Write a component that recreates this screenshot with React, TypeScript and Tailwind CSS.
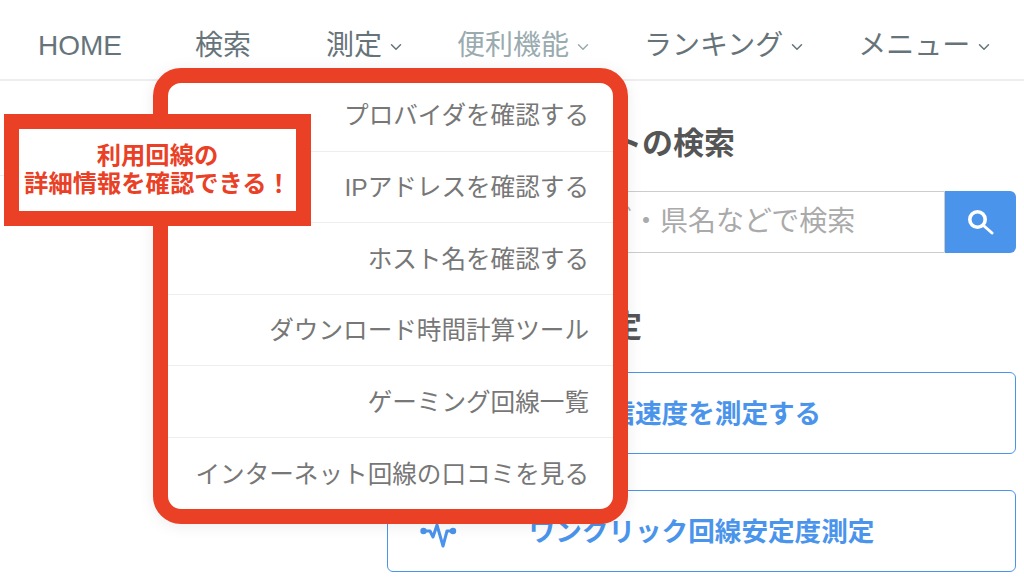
import { ChevronDown } from "lucide-react";

const font = "font-['Liberation_Sans','Noto_Sans_CJK_JP',sans-serif]";

const navItems = [
  { label: "HOME", cls: "pl-[38px] pr-[36px]", chevron: false, color: "text-[#66747a]" },
  { label: "検索", cls: "pl-[37px] pr-[37px]", chevron: false, color: "text-[#66747a]" },
  { label: "測定", cls: "pl-[38px] pr-[24px]", chevron: true, color: "text-[#66747a]" },
  { label: "便利機能", cls: "pl-[28px] pr-[24px]", chevron: true, color: "text-[#9aabaf]" },
  { label: "ランキング", cls: "pl-[28px] pr-[24px]", chevron: true, color: "text-[#66747a]" },
  { label: "メニュー", cls: "pl-[28px] pr-[24px]", chevron: true, color: "text-[#66747a]" },
];

const menuItems = [
  "プロバイダを確認する",
  "IPアドレスを確認する",
  "ホスト名を確認する",
  "ダウンロード時間計算ツール",
  "ゲーミング回線一覧",
  "インターネット回線の口コミを見る",
];

function PulseIcon() {
  return (
    <svg width="38" height="28" viewBox="0 0 38 28" fill="none" stroke="#4a94ec" strokeWidth="3" strokeLinejoin="round" strokeLinecap="round">
      <path d="M3.5 11H10L13 17L17 5L23 26L27 11H33" />
      <circle cx="3.5" cy="11" r="3.2" fill="#4a94ec" stroke="none" />
      <circle cx="33" cy="11" r="3.2" fill="#4a94ec" stroke="none" />
    </svg>
  );
}

function SearchIcon() {
  return (
    <svg width="26" height="25" viewBox="0 0 26 25" fill="none" stroke="#ffffff" strokeLinecap="round">
      <circle cx="9.5" cy="9.5" r="7.7" strokeWidth="3.6" />
      <path d="M15.5 15.5L24 23" strokeWidth="3" />
    </svg>
  );
}

export default function App() {
  return (
    <div className={`relative h-[579px] w-[1024px] overflow-hidden bg-white ${font}`}>
      <nav className="flex h-[81px] items-start border-b-2 border-[#eeeeee] pt-[25px]">
        {navItems.map((n) => (
          <div key={n.label} className={`flex h-[42px] items-center whitespace-nowrap text-[28px] leading-[42px] ${n.cls} ${n.color}`}>
            <span>{n.label}</span>
            {n.chevron && <ChevronDown className="ml-[5px] mt-[1px] h-[18px] w-[18px]" strokeWidth={2} />}
          </div>
        ))}
      </nav>

      <main className="flex justify-end pr-[8px]">
        <div className="w-[629px] pt-[41px]">
          <h2 className="h-[44px] pl-[38px] text-[31px] font-bold leading-[44px] text-[#555555]">インターネットの検索</h2>
          <div className="mt-[25px] flex h-[62px]">
            <input
              readOnly
              placeholder="回線・プロバイダ・県名などで検索"
              className="min-w-0 flex-1 rounded-l-[6px] border border-[#cccccc] pl-[21px] text-[28px] outline-none placeholder:text-[#aaaaaa]"
            />
            <button className="flex w-[71px] items-center justify-center rounded-r-[6px] bg-[#4a94ec]">
              <SearchIcon />
            </button>
          </div>
          <h2 className="mt-[52px] h-[44px] pl-[38px] text-[31px] font-bold leading-[44px] text-[#555555]">回線速度の測定</h2>
          <div className="mt-[23px] flex flex-col gap-[36px]">
            <a className="flex h-[82px] items-center justify-center rounded-[6px] border border-[#4a94ec] pt-[3px] text-[26.6px] font-bold text-[#4a94ec]">
              通信速度を測定する
            </a>
            <a className="relative flex h-[82px] items-center justify-center rounded-[6px] border border-[#4a94ec] pt-[3px] text-[26.6px] font-bold text-[#4a94ec]">
              <span className="absolute left-[32px] top-[29px]"><PulseIcon /></span>
              ワンクリック回線安定度測定
            </a>
          </div>
        </div>
      </main>

      <div className="absolute left-0 top-[175px] h-px w-[153px] bg-[#eeeeee]" />

      <div className="absolute left-[153px] top-[68px] w-[475px] rounded-[28px] border-[15px] border-[#ea4026] bg-white shadow-[0_2px_16px_rgba(0,0,0,0.08)]">
        {menuItems.map((m, i) => (
          <div
            key={m}
            className={`flex items-center justify-end whitespace-nowrap pr-[24px] text-[24.6px] text-[#777777] ${i === 0 ? "h-[68.5px]" : "h-[71.5px] pt-[3.5px]"} ${i < menuItems.length - 1 ? "border-b border-[#eeeeee]" : ""}`}
          >
            {m}
          </div>
        ))}
      </div>

      <div className="absolute left-[4px] top-[114px] flex h-[112px] w-[307px] flex-col items-center justify-center border-[15px] border-[#ea4026] bg-white text-center text-[24.3px] font-bold leading-[28px] text-[#ea4026]">
        <span>利用回線の</span>
        <span className="whitespace-nowrap">詳細情報を確認できる！</span>
      </div>
    </div>
  );
}
